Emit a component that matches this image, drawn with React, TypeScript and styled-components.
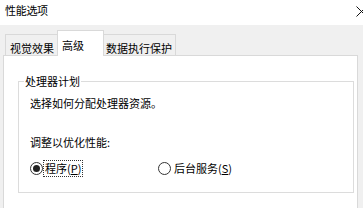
import styled, { createGlobalStyle } from "styled-components";

const GlobalStyle = createGlobalStyle`
  html, body {
    margin: 0;
    padding: 0;
    background: #f0f0f0;
  }
  body {
    font-family: "Noto Sans CJK SC", "Microsoft YaHei", sans-serif;
    font-size: 11px;
    color: #000;
  }
`;

const App = () => {
  return (
    <>
      <GlobalStyle />
      <StyledWindow>
        <StyledTitleBar>
          <StyledTitle>性能选项</StyledTitle>
          <StyledClose viewBox="0 0 11 11">
            <path d="M0.5 0.5 L10.5 10.5 M10.5 0.5 L0.5 10.5" stroke="#111" strokeWidth="1" fill="none" />
          </StyledClose>
        </StyledTitleBar>

        <StyledBody>
          <StyledTabList>
            <StyledTab $width={53}>视觉效果</StyledTab>
            <StyledTab $width={47} $active>
              高级
            </StyledTab>
            <StyledTab $width={73} $pad={2}>
              数据执行保护
            </StyledTab>
          </StyledTabList>

          <StyledPage>
            <StyledGroup>
              <StyledLegend>处理器计划</StyledLegend>
              <StyledGroupContent>
                <StyledText>选择如何分配处理器资源。</StyledText>
                <StyledSubLabel>调整以优化性能:</StyledSubLabel>
                <StyledRadioRow>
                  <StyledRadioOption $width={128}>
                    <StyledRadio $checked />
                    <StyledRadioLabel $focused>
                      程序(<u>P</u>)
                    </StyledRadioLabel>
                  </StyledRadioOption>
                  <StyledRadioOption>
                    <StyledRadio />
                    <StyledRadioLabel>
                      后台服务(<u>S</u>)
                    </StyledRadioLabel>
                  </StyledRadioOption>
                </StyledRadioRow>
              </StyledGroupContent>
            </StyledGroup>
          </StyledPage>
        </StyledBody>
      </StyledWindow>
    </>
  );
};

export default App;

const StyledWindow = styled.div`
  width: 363px;
  height: 208px;
  overflow: hidden;
  display: flex;
  flex-direction: column;
`;

const StyledTitleBar = styled.div`
  height: 25px;
  flex-shrink: 0;
  background: #fff;
  display: flex;
  align-items: flex-start;
  justify-content: space-between;
  padding: 4px 0 0 5px;
  box-sizing: border-box;
`;

const StyledTitle = styled.div`
  line-height: 13px;
  letter-spacing: -0.3px;
`;

const StyledClose = styled.svg`
  width: 11px;
  height: 11px;
  margin-top: 2px;
  margin-right: -4px;
  flex-shrink: 0;
`;

const StyledBody = styled.div`
  flex: 1;
  padding: 5px 0 0 3px;
  min-height: 0;
`;

const StyledTabList = styled.div`
  display: flex;
  align-items: flex-end;
  height: 26px;
  padding-left: 2px;
  margin-bottom: -1px;
  position: relative;
  z-index: 1;
`;

const StyledTab = styled.div<{ $width: number; $active?: boolean; $pad?: number }>`
  box-sizing: border-box;
  width: ${(p) => p.$width}px;
  height: ${(p) => (p.$active ? 26 : 22)}px;
  margin-right: -1px;
  padding-left: ${(p) => p.$pad ?? 4}px;
  padding-top: ${(p) => (p.$active ? 8 : 7)}px;
  line-height: 13px;
  white-space: nowrap;
  border: 1px solid #d9d9d9;
  border-bottom: ${(p) => (p.$active ? "none" : "1px solid #d9d9d9")};
  background: ${(p) => (p.$active ? "#fff" : "#f0f0f0")};
  position: relative;
  z-index: ${(p) => (p.$active ? 2 : 1)};
`;

const StyledPage = styled.div`
  width: 355px;
  height: 170px;
  box-sizing: border-box;
  background: #fff;
  border: 1px solid #d9d9d9;
  padding: 19px 4px 0 14px;
`;

const StyledGroup = styled.fieldset`
  margin: 0;
  padding: 0 0 15px 0;
  min-width: 0;
  width: 336px;
  box-sizing: border-box;
  border: 1px solid #dcdcdc;
`;

const StyledLegend = styled.legend`
  margin-left: 5px;
  padding: 0 1px;
  line-height: 13px;
`;

const StyledGroupContent = styled.div`
  padding-left: 11px;
`;

const StyledText = styled.div`
  margin-top: 9px;
  line-height: 13px;
`;

const StyledSubLabel = styled.div`
  margin-top: 26px;
  line-height: 13px;
`;

const StyledRadioRow = styled.div`
  margin-top: 11px;
  height: 17px;
  display: flex;
  align-items: center;
`;

const StyledRadioOption = styled.div<{ $width?: number }>`
  display: flex;
  align-items: center;
  width: ${(p) => (p.$width ? `${p.$width}px` : "auto")};
`;

const StyledRadio = styled.span<{ $checked?: boolean }>`
  width: 13px;
  height: 13px;
  box-sizing: border-box;
  border: 1px solid #333;
  border-radius: 50%;
  display: flex;
  align-items: center;
  justify-content: center;
  background: #fff;
  flex-shrink: 0;

  &::after {
    content: "";
    width: 7px;
    height: 7px;
    border-radius: 50%;
    background: #222;
    display: ${(p) => (p.$checked ? "block" : "none")};
  }
`;

const StyledRadioLabel = styled.span<{ $focused?: boolean }>`
  line-height: 13px;
  padding: 1px 1px 1px 1px;
  margin-left: ${(p) => (p.$focused ? 0 : 1)}px;
  border: 1px ${(p) => (p.$focused ? "dotted #333" : "solid transparent")};
  white-space: nowrap;

  u {
    text-underline-offset: 1px;
  }
`;
